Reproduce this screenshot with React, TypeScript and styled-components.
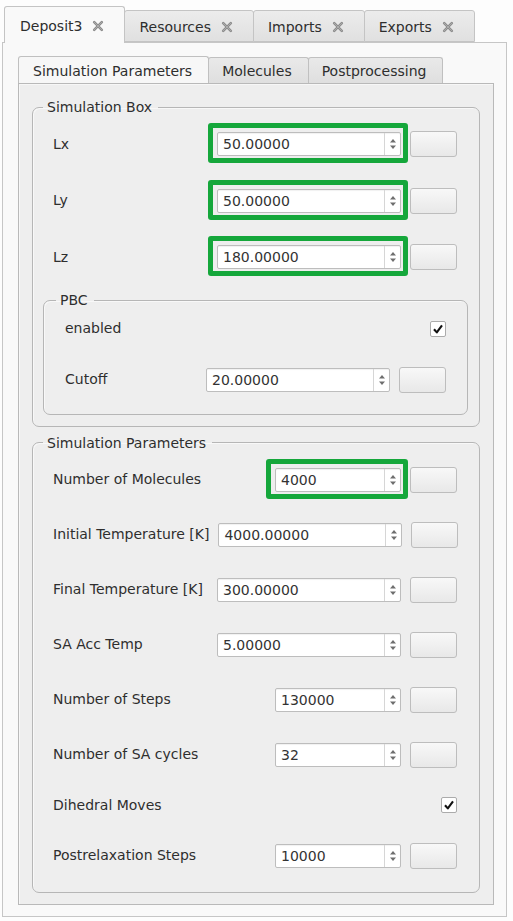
import styled, { createGlobalStyle } from "styled-components"

const GlobalStyle = createGlobalStyle`
    html, body {
        margin: 0;
        padding: 0;
        background: #fdfdfd;
    }
    body {
        font-family: "DejaVu Sans", "Liberation Sans", sans-serif;
        font-size: 14px;
        color: #2f2f2f;
    }
    * { box-sizing: border-box; }
`

type Field = {
    label: string
    value?: string
    width?: number
    check?: boolean
    highlight?: boolean
}

const boxRows: Field[] = [
    { label: "Lx", value: "50.00000", width: 184, highlight: true },
    { label: "Ly", value: "50.00000", width: 184, highlight: true },
    { label: "Lz", value: "180.00000", width: 184, highlight: true },
]

const pbcRows: Field[] = [
    { label: "enabled", check: true },
    { label: "Cutoff", value: "20.00000", width: 184 },
]

const simRows: Field[] = [
    { label: "Number of Molecules", value: "4000", width: 126, highlight: true },
    { label: "Initial Temperature [K]", value: "4000.00000", width: 184 },
    { label: "Final Temperature [K]", value: "300.00000", width: 184 },
    { label: "SA Acc Temp", value: "5.00000", width: 184 },
    { label: "Number of Steps", value: "130000", width: 126 },
    { label: "Number of SA cycles", value: "32", width: 126 },
    { label: "Dihedral Moves", check: true },
    { label: "Postrelaxation Steps", value: "10000", width: 126 },
]

function CloseIcon() {
    return (
        <svg width="12" height="12" viewBox="0 0 12 12">
            <path d="M2.2 2.2 L9.8 9.8 M9.8 2.2 L2.2 9.8" stroke="#8c8c8c" strokeWidth="2.6" strokeLinecap="round" />
            <path d="M2.2 2.2 L9.8 9.8 M9.8 2.2 L2.2 9.8" stroke="#b4b4b4" strokeWidth="0.8" strokeLinecap="round" />
        </svg>
    )
}

function SpinArrows() {
    return (
        <svg width="8" height="14" viewBox="0 0 8 14">
            <polygon points="1,5.5 4,2 7,5.5" fill="#6e6e6e" />
            <polygon points="1,8.5 4,12 7,8.5" fill="#6e6e6e" />
        </svg>
    )
}

function CheckMark() {
    return (
        <svg width="12" height="12" viewBox="0 0 12 12">
            <path d="M2 6.2 L4.8 9.4 L10 2.4" stroke="#111" strokeWidth="2.1" fill="none" strokeLinejoin="round" />
        </svg>
    )
}

function FieldRow({ field }: { field: Field }) {
    if (field.check) {
        return (
            <Row $height={17}>
                <Label>{field.label}</Label>
                <CheckBox><CheckMark /></CheckBox>
            </Row>
        )
    }
    return (
        <Row $height={26}>
            <Label>{field.label}</Label>
            <SpinBox $width={field.width || 184} $highlight={!!field.highlight}>
                <SpinValue>{field.value}</SpinValue>
                <SpinButtons><SpinArrows /></SpinButtons>
            </SpinBox>
            <ToolButton />
        </Row>
    )
}

export default function App() {
    return (
        <>
            <GlobalStyle />
            <Window>
                <OuterTabBar>
                    <OuterTab $active>Deposit3 <CloseIcon /></OuterTab>
                    <OuterTab>Resources <CloseIcon /></OuterTab>
                    <OuterTab>Imports <CloseIcon /></OuterTab>
                    <OuterTab>Exports <CloseIcon /></OuterTab>
                </OuterTabBar>
                <OuterPane>
                    <InnerTabBar>
                        <InnerTab $active>Simulation Parameters</InnerTab>
                        <InnerTab>Molecules</InnerTab>
                        <InnerTab>Postprocessing</InnerTab>
                    </InnerTabBar>
                    <InnerPane>
                        <GroupBox $pad="16px 11px 11px 10px">
                            <Legend>Simulation Box</Legend>
                            <Rows $gap={30.5} $inset="0 11px 0 10px">
                                {boxRows.map(r => <FieldRow key={r.label} field={r} />)}
                            </Rows>
                            <GroupBox $pad="12px 11px 21px 12px" $top={22}>
                                <Legend>PBC</Legend>
                                <Rows $gap={29.5} $inset="0 10px 0 9px">
                                    {pbcRows.map(r => <FieldRow key={r.label} field={r} />)}
                                </Rows>
                            </GroupBox>
                        </GroupBox>
                        <GroupBox $pad="16px 11px 23px 10px" $top={8}>
                            <Legend>Simulation Parameters</Legend>
                            <Rows $gap={29} $inset="0 11px 0 10px">
                                {simRows.map(r => <FieldRow key={r.label} field={r} />)}
                            </Rows>
                        </GroupBox>
                    </InnerPane>
                </OuterPane>
            </Window>
        </>
    )
}

const Window = styled.div`
    width: 513px;
    height: 921px;
    padding-left: 2px;
    overflow: hidden;
`

const OuterTabBar = styled.div`
    display: flex;
    align-items: flex-end;
    height: 42px;
    padding-left: 2px;
`

const OuterTab = styled.div<{ $active?: boolean }>`
    display: flex;
    align-items: center;
    gap: 10px;
    height: ${p => (p.$active ? "37px" : "32px")};
    margin-bottom: ${p => (p.$active ? "-1px" : "0")};
    margin-right: -1px;
    padding: 1px 20px 0 14px;
    padding-left: ${p => (p.$active ? "15px" : "14px")};
    border: 1px solid #c4c4c4;
    border-bottom: ${p => (p.$active ? "none" : "1px solid #c4c4c4")};
    border-radius: 3px 3px 0 0;
    background: ${p => (p.$active ? "#f9f9f9" : "linear-gradient(#ececec, #e0e0e0)")};
    position: relative;
    z-index: ${p => (p.$active ? 1 : 0)};
    color: #2e2e2e;
    white-space: nowrap;
`

const OuterPane = styled.div`
    width: 505px;
    border: 1px solid #c6c6c6;
    background: #f9f9f9;
    padding: 13px 12px 11px 15px;
`

const InnerTabBar = styled.div`
    display: flex;
    align-items: flex-end;
    height: 27px;
`

const InnerTab = styled.div<{ $active?: boolean }>`
    display: flex;
    align-items: center;
    height: ${p => (p.$active ? "27px" : "26px")};
    margin-right: -1px;
    padding: 1px 16px 0 14px;
    padding-left: ${p => (p.$active ? "14px" : "13px")};
    border: 1px solid #c0c0c0;
    border-bottom: none;
    border-radius: 3px 3px 0 0;
    background: ${p => (p.$active ? "#f7f7f7" : "linear-gradient(#e9e9e9, #dfdfdf)")};
    color: #2e2e2e;
    white-space: nowrap;
`

const InnerPane = styled.div`
    border: 1px solid #b9b9b9;
    box-shadow: inset 1px 1px 0 #f7f7f7;
    background: #eeeeee;
    padding: 15px 13px 11px 13px;
`

const GroupBox = styled.fieldset<{ $pad: string; $top?: number }>`
    margin: ${p => p.$top || 0}px 0 0 0;
    min-width: 0;
    padding: ${p => p.$pad};
    border: 1px solid #b6b6b6;
    border-radius: 7px;
    box-shadow: inset 1px 1px 0 #f8f8f8;
`

const Legend = styled.legend`
    padding: 0 6px 0 4px;
    line-height: 16px;
    font-size: 14px;
    color: #2e2e2e;
`

const Rows = styled.div<{ $gap: number; $inset: string }>`
    display: flex;
    flex-direction: column;
    gap: ${p => p.$gap}px;
    padding: ${p => p.$inset};
`

const Row = styled.div<{ $height: number }>`
    display: grid;
    grid-template-columns: 1fr auto 47px;
    column-gap: 9px;
    align-items: center;
    height: ${p => p.$height}px;
`

const Label = styled.span`
    grid-column: 1;
    line-height: 17px;
    color: #2e2e2e;
    white-space: nowrap;
`

const SpinBox = styled.div<{ $width: number; $highlight: boolean }>`
    grid-column: 2;
    justify-self: end;
    position: relative;
    display: flex;
    width: ${p => p.$width}px;
    height: 24px;
    border: 1px solid #bdbdbd;
    border-radius: 2px;
    background: #fff;
    box-shadow: inset 0 1px 1px rgba(0, 0, 0, 0.06);

    &::after {
        content: "";
        display: ${p => (p.$highlight ? "block" : "none")};
        position: absolute;
        top: -10px;
        bottom: -8px;
        left: -10px;
        right: -8px;
        border: 5px solid #15a73b;
        border-radius: 3px;
        pointer-events: none;
    }
`

const SpinValue = styled.span`
    flex: 1;
    padding-left: 5px;
    line-height: 22px;
    color: #333;
`

const SpinButtons = styled.span`
    width: 16px;
    display: flex;
    align-items: center;
    justify-content: center;
    border-left: 1px solid #d6d6d6;
`

const ToolButton = styled.div`
    grid-column: 3;
    width: 47px;
    height: 26px;
    border: 1px solid #bdbdbd;
    border-radius: 3px;
    background: linear-gradient(#f8f8f8, #e8e8e8);
`

const CheckBox = styled.span`
    grid-column: 3;
    justify-self: end;
    width: 16px;
    height: 16px;
    display: flex;
    align-items: center;
    justify-content: center;
    border: 1px solid #ababab;
    border-radius: 2px;
    background: #fff;
`
